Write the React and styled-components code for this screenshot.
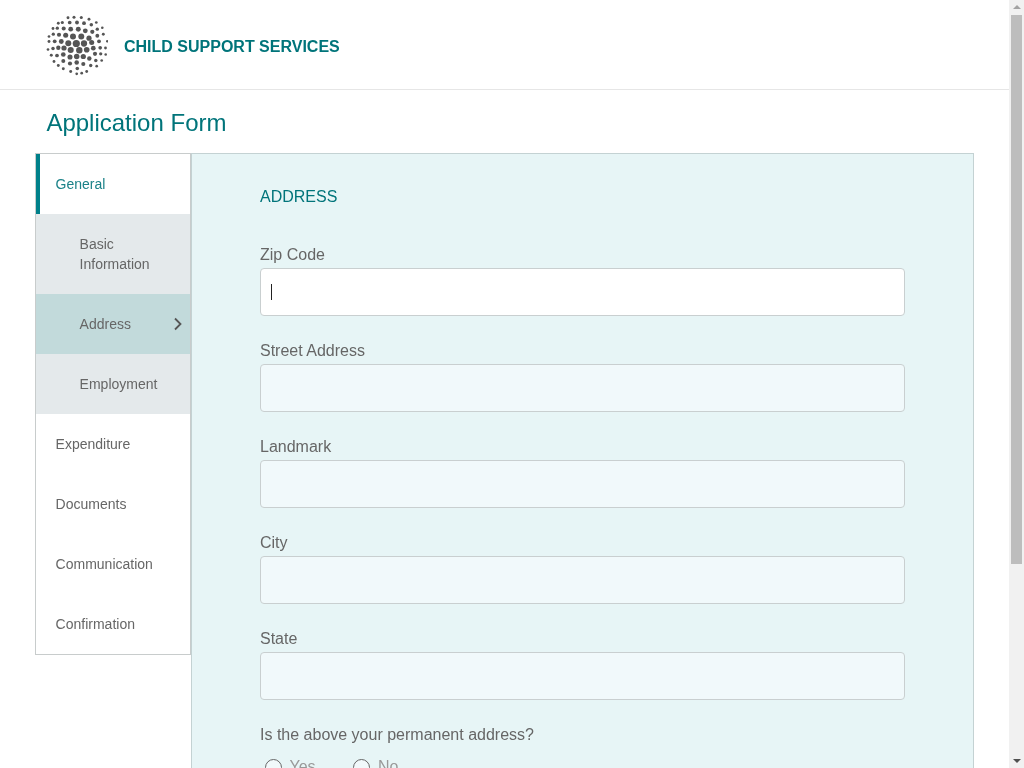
import React from 'react'
import styled, {createGlobalStyle} from 'styled-components'

const teal = '#00747a'
const textGrey = '#666'

const GlobalStyle = createGlobalStyle`
  html, body {
    margin: 0;
    padding: 0;
    background: #fff;
    font-family: "Liberation Sans", Arial, sans-serif;
  }
  * {
    box-sizing: border-box;
  }
`

const Page = styled.div`
  height: 1032px;
  display: flex;
  flex-direction: column;
  will-change: transform;
`

const Header = styled.header`
  height: 90px;
  flex: none;
  display: flex;
  align-items: center;
  gap: 16px;
  padding-left: 46px;
  border-bottom: 1px solid #e6e6e6;
`

const Brand = styled.div`
  color: ${teal};
  font-size: 16px;
  font-weight: bold;
  margin-top: 4px;
`

const Title = styled.h1`
  margin: 0;
  height: 63px;
  padding: 19px 0 0 46.4px;
  color: ${teal};
  font-size: 24px;
  line-height: 28px;
  font-weight: normal;
`

const Content = styled.div`
  flex: 1;
  display: flex;
  align-items: flex-start;
  padding-left: 35px;
  width: 974px;
`

const Side = styled.nav`
  width: 156px;
  flex: none;
  border: 1px solid #c8cccc;
`

const SideItem = styled.div`
  position: relative;
  min-height: 60px;
  display: flex;
  align-items: center;
  padding: 20px 20px 20px ${({$sub, $active}) => $sub ? '43.6px' : $active ? '15.6px' : '19.6px'};
  background: ${({$selected, $sub}) => $selected ? '#c2dadb' : $sub ? '#e4e9eb' : '#fff'};
  border-left: ${({$active}) => $active ? `4px solid #00808a` : 'none'};
  color: ${({$active}) => $active ? '#1b8288' : textGrey};
  font-size: 14px;
  line-height: 20px;
`

const Chevron = styled.svg`
  position: absolute;
  right: 7px;
  top: 23px;
`

const Panel = styled.main`
  flex: 1;
  align-self: stretch;
  background: #e7f5f6;
  border: 1px solid #c4d2d3;
  border-bottom: none;
  padding: 33px 68px 0;
`

const SectionTitle = styled.h2`
  margin: 0 0 36px;
  color: ${teal};
  font-size: 16px;
  line-height: 20px;
  font-weight: normal;
`

const Field = styled.div`
  position: relative;
  width: 645px;
  margin-bottom: 23px;
`

const Label = styled.label`
  display: block;
  margin-bottom: 1px;
  color: ${textGrey};
  font-size: 16px;
  line-height: 24px;
`

const Input = styled.input`
  display: block;
  width: 100%;
  height: 48px;
  padding: 0 10px;
  border: 1px solid #c9cfd0;
  border-radius: 4px;
  background: ${({$focused}) => $focused ? '#fff' : '#f1f9fb'};
  outline: none;
`

const Caret = styled.span`
  position: absolute;
  left: 11px;
  top: 41px;
  width: 1px;
  height: 16px;
  background: #222;
`

const Question = styled.div`
  color: ${textGrey};
  font-size: 16px;
  line-height: 24px;
`

const RadioRow = styled.div`
  display: flex;
  align-items: center;
  margin-top: 11px;
  padding-left: 5px;
`

const RadioOption = styled.div`
  display: flex;
  align-items: center;
  gap: 7.5px;
  width: 88.4px;
  color: #999;
  font-size: 16px;
  line-height: 18px;
`

const RadioCircle = styled.span`
  width: 17px;
  height: 17px;
  border: 1.5px solid #666;
  border-radius: 50%;
  background: #f1f9fb;
`

const ScrollTrack = styled.div`
  position: fixed;
  top: 0;
  right: 0;
  bottom: 0;
  width: 15px;
  background: #f1f1f1;
`

const ScrollThumb = styled.div`
  position: absolute;
  top: 15px;
  left: 2px;
  width: 11px;
  height: 549px;
  background: #bdbdbd;
`

const ScrollArrow = styled.div`
  position: absolute;
  left: 4px;
  width: 0;
  height: 0;
  border-left: 4px solid transparent;
  border-right: 4px solid transparent;
  ${({$down}) => $down
    ? 'bottom: 5px; border-top: 4px solid #505050;'
    : 'top: 5px; border-bottom: 4px solid #a3a3a3;'}
`

// dot centres read off the reference logo, in page pixels
const dots = [
  [68, 17.3], [74, 16.7], [81.3, 17], [89, 18.7],
  [58.3, 22.7], [62.3, 22], [69.7, 22], [77, 22], [84, 22.7], [91.3, 24.3], [96.3, 22],
  [53, 28], [57.3, 27.7], [63.7, 28], [70.7, 28.7], [78.3, 28.7], [85.3, 30.3], [92.3, 31.3], [97.3, 28.7], [102.3, 27.3],
  [49, 36], [53.3, 33.7], [59, 34.3], [65.7, 34.7], [73, 36], [81.3, 36], [89, 37.7], [97.3, 35.3], [103.3, 33.7],
  [49, 41], [54.7, 40.8], [61.3, 41], [68.3, 42.7], [76.3, 43], [84, 43], [91.7, 42], [99, 40.8], [107.3, 40.8],
  [48, 49], [53, 48], [58.3, 47.3], [64, 47.5], [70.7, 49.5], [79.3, 49.8], [86.7, 49.3], [93.3, 47.7], [100.2, 47.3], [105.5, 47.5],
  [51.3, 54.7], [57, 55], [63.3, 54], [70, 56.5], [76.7, 56], [83.3, 56], [89.3, 58], [95, 53.3], [100.7, 53.3], [105.7, 54],
  [54, 61], [58.3, 65], [63.3, 60.5], [70, 63], [76.7, 62], [83.3, 63.5], [95.8, 60], [96.7, 65.7], [101.7, 60], [90.7, 65],
  [63.3, 68.3], [70.7, 71], [77.3, 68], [86.7, 71],
  [76.7, 73.3], [81.7, 72.7]
]

const dotRadius = (x, y) => Math.max(1.3, 3.7 - Math.hypot(x - 77, y - 44) * 0.08)

const Logo = () =>
  <svg width="62" height="62" viewBox="46 13.5 62 62" fill="#555">
    {dots.map(([x, y]) => <circle key={`${x}-${y}`} cx={x} cy={y} r={dotRadius(x, y)}/>)}
  </svg>

const menu = [
  {label: 'General', active: true},
  {label: 'Basic Information', sub: true},
  {label: 'Address', sub: true, selected: true},
  {label: 'Employment', sub: true},
  {label: 'Expenditure'},
  {label: 'Documents'},
  {label: 'Communication'},
  {label: 'Confirmation'}
]

const fields = ['Zip Code', 'Street Address', 'Landmark', 'City', 'State']

const App = () =>
  <>
    <GlobalStyle/>
    <Page>
      <Header>
        <Logo/>
        <Brand>CHILD SUPPORT SERVICES</Brand>
      </Header>
      <Title>Application Form</Title>
      <Content>
        <Side>
          {menu.map(({label, active, sub, selected}) =>
            <SideItem key={label} $active={active} $sub={sub} $selected={selected}>
              {label}
              {selected &&
                <Chevron width="10" height="14" viewBox="0 0 10 14" fill="none" stroke="#555" strokeWidth="1.8">
                  <path d="M2 1.5 7.5 7 2 12.5"/>
                </Chevron>}
            </SideItem>
          )}
        </Side>
        <Panel>
          <SectionTitle>ADDRESS</SectionTitle>
          {fields.map((label, i) =>
            <Field key={label}>
              <Label>{label}</Label>
              <Input $focused={i === 0}/>
              {i === 0 && <Caret/>}
            </Field>
          )}
          <Question>Is the above your permanent address?</Question>
          <RadioRow>
            <RadioOption><RadioCircle/>Yes</RadioOption>
            <RadioOption><RadioCircle/>No</RadioOption>
          </RadioRow>
        </Panel>
      </Content>
    </Page>
    <ScrollTrack>
      <ScrollArrow/>
      <ScrollThumb/>
      <ScrollArrow $down/>
    </ScrollTrack>
  </>

export default App
